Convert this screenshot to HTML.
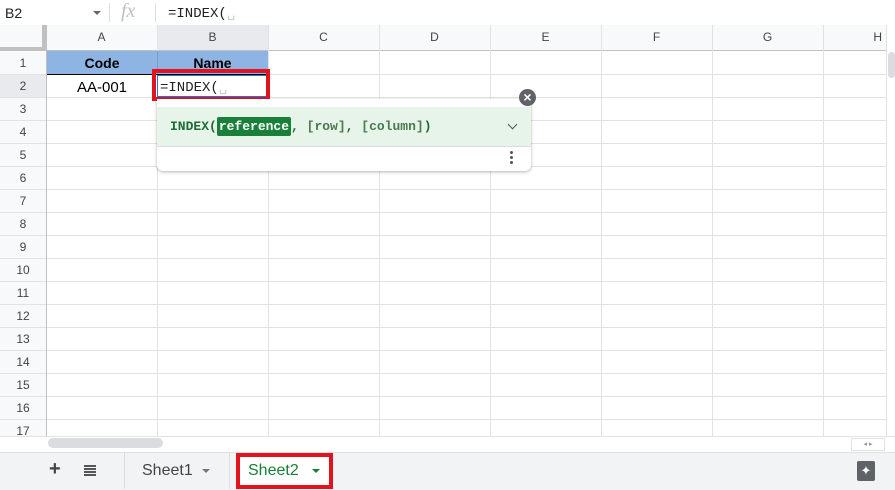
<!DOCTYPE html><html><head><style>
body{margin:0;width:895px;height:489px;overflow:hidden;background:#fff;font-family:"Liberation Sans",Arial,sans-serif;position:relative}
.a{position:absolute}
.vl{position:absolute;width:1px;background:#e2e2e2}
.hl{position:absolute;height:1px;background:#e2e2e2}
.rh{position:absolute;left:0;width:46px;height:23px;text-align:center;font-size:12px;color:#444;line-height:23px;background:#f8f9fa}
.ch{position:absolute;top:25px;height:25px;text-align:center;font-size:12px;color:#444;line-height:25px;background:#f8f9fa}
.mono{font-family:"Liberation Mono","DejaVu Sans Mono",monospace}
</style></head><body>
<div class="a" style="left:0;top:0;width:895px;height:25px;border-bottom:1px solid #c7c7c7"></div>
<div class="a" style="left:5px;top:5px;font-size:14px;color:#222">B2</div>
<div class="a" style="left:93px;top:11px;width:0;height:0;border-left:4px solid transparent;border-right:4px solid transparent;border-top:4px solid #666"></div>
<div class="a" style="left:109px;top:3px;width:1px;height:19px;background:#ddd"></div>
<div class="a" style="left:121px;top:0px;font-size:20px;font-style:italic;color:#c0c0c0;font-family:'Liberation Serif',serif">fx</div>
<div class="a" style="left:155px;top:3px;width:1px;height:19px;background:#ddd"></div>
<div class="a mono" style="left:168px;top:5px;font-size:14px;color:#222">=INDEX(<span style="color:#ccc">&#9251;</span></div>
<div class="a" style="left:0;top:25px;width:46px;height:26px;background:#f8f9fa;border-right:4px solid #c0c0c0;box-sizing:border-box;border-bottom:4px solid #c0c0c0"></div>
<div class="ch" style="left:46px;width:111px">A</div>
<div class="ch" style="left:157px;width:111px;background:#e8eaed">B</div>
<div class="ch" style="left:268px;width:111px">C</div>
<div class="ch" style="left:379px;width:111px">D</div>
<div class="ch" style="left:490px;width:111px">E</div>
<div class="ch" style="left:601px;width:111px">F</div>
<div class="ch" style="left:712px;width:111px">G</div>
<div class="ch" style="left:823px;width:63px;text-align:right;padding-right:4px;box-sizing:border-box">H</div>
<div class="a" style="left:0;top:50px;width:886px;height:1px;background:#c0c0c0"></div>
<div id="rows"></div>
<script>
var s='';for(var r=1;r<=17;r++){var t=52+(r-1)*23;s+='<div class="rh" style="top:'+t+'px;'+(r==2?'background:#e8eaed;':'')+'">'+r+'</div><div class="hl" style="left:0;width:886px;top:'+(t+22)+'px"></div>';}
var xs=[157,268,379,490,601,712,823];for(var i=0;i<xs.length;i++){s+='<div class="vl" style="left:'+xs[i]+'px;top:25px;height:418px"></div>';}
s+='<div class="vl" style="left:46px;top:25px;height:418px;background:#c0c0c0"></div>';
document.getElementById('rows').innerHTML=s;
</script>
<div class="a" style="left:47px;top:51px;width:221px;height:23px;background:#8eb4e3;border-bottom:1px solid #000"></div>
<div class="a" style="left:157px;top:51px;width:1px;height:23px;background:#7a9cc8"></div>
<div class="a" style="left:47px;top:55px;width:110px;text-align:center;font-weight:bold;font-size:14px">Code</div>
<div class="a" style="left:157px;top:55px;width:111px;text-align:center;font-weight:bold;font-size:14px">Name</div>
<div class="a" style="left:47px;top:79px;width:110px;text-align:center;font-size:15px">AA-001</div>
<div class="a" style="left:157px;top:75px;width:110px;height:22px;background:#fff;border:1px solid #1a73e8;box-sizing:border-box"></div>
<div class="a mono" style="left:160px;top:79px;font-size:14px;color:#222">=INDEX(<span style="color:#ccc">&#9251;</span></div>
<div class="a" style="left:152px;top:69px;width:118px;height:32px;border:4px solid #e3131e;box-sizing:border-box"></div>
<div class="a" style="left:157px;top:99px;width:374px;height:72px;background:#fff;border-radius:0 0 6px 6px;box-shadow:0 1px 3px rgba(0,0,0,.3)"></div>
<div class="a" style="left:157px;top:107px;width:374px;height:39px;background:#e6f4ea;border-bottom:1px solid #ddd"></div>
<div class="a mono" style="left:170px;top:119px;font-size:13px;font-weight:bold;color:#1e6e34">INDEX(<span style="background:#188038;color:#fff;padding:2px 2px;border-radius:2px">reference</span>, <span style="color:#4b7a4f">[row]</span>, <span style="color:#4b7a4f">[column]</span>)</div>
<div class="a" style="left:509px;top:121px;width:6px;height:6px;border-right:1.5px solid #555;border-bottom:1.5px solid #555;transform:rotate(45deg)"></div>
<div class="a" style="left:510px;top:151px;width:3px;height:3px;border-radius:50%;background:#555;box-shadow:0 5px 0 #555,0 10px 0 #555"></div>
<div class="a" style="left:519px;top:89px;width:17px;height:17px;border-radius:50%;background:#5f6368;color:#fff;text-align:center;line-height:17px;font-size:14px;font-weight:bold">×</div>
<div class="a" style="left:886px;top:25px;width:9px;height:418px;background:#fff;border-left:1px solid #e2e2e2"></div>
<div class="a" style="left:888px;top:52px;width:7px;height:26px;background:#dadce0;border-radius:4px"></div>
<div class="a" style="left:0;top:436px;width:895px;height:16px;background:#fff;border-top:1px solid #e2e2e2"></div>
<div class="a" style="left:48px;top:438px;width:115px;height:10px;background:#dadce0;border-radius:5px"></div>
<div class="a" style="left:851px;top:438px;width:32px;height:11px;border:1px solid #e2e2e2;font-size:7px;color:#999;line-height:11px;text-align:center">◂ ▸</div>
<div class="a" style="left:0;top:452px;width:895px;height:37px;background:#f1f3f4;border-top:1px solid #e0e0e0"></div>
<div class="a" style="left:49px;top:458px;font-size:20px;color:#444;font-weight:bold">+</div>
<div class="a" style="left:84px;top:465px;width:12px;height:2px;background:#555;box-shadow:0 3px 0 #555,0 6px 0 #555,0 9px 0 #555"></div>
<div class="a" style="left:124px;top:453px;width:1px;height:36px;background:#ddd"></div>
<div class="a" style="left:142px;top:462px;font-size:16px;color:#444">Sheet1</div>
<div class="a" style="left:202px;top:469px;border-left:4px solid transparent;border-right:4px solid transparent;border-top:4px solid #777"></div>
<div class="a" style="left:229px;top:453px;width:1px;height:36px;background:#ddd"></div>
<div class="a" style="left:236px;top:453px;width:97px;height:36px;background:#fff;border:4px solid #e3131e;box-sizing:border-box"></div>
<div class="a" style="left:248px;top:462px;font-size:16px;color:#188038">Sheet2</div>
<div class="a" style="left:312px;top:469px;border-left:4px solid transparent;border-right:4px solid transparent;border-top:4px solid #188038"></div>
<div class="a" style="left:857px;top:461px;width:18px;height:20px;background:#5f6368;border-radius:2px;color:#fff;text-align:center;font-size:13px;line-height:20px">✦</div>
</body></html>
